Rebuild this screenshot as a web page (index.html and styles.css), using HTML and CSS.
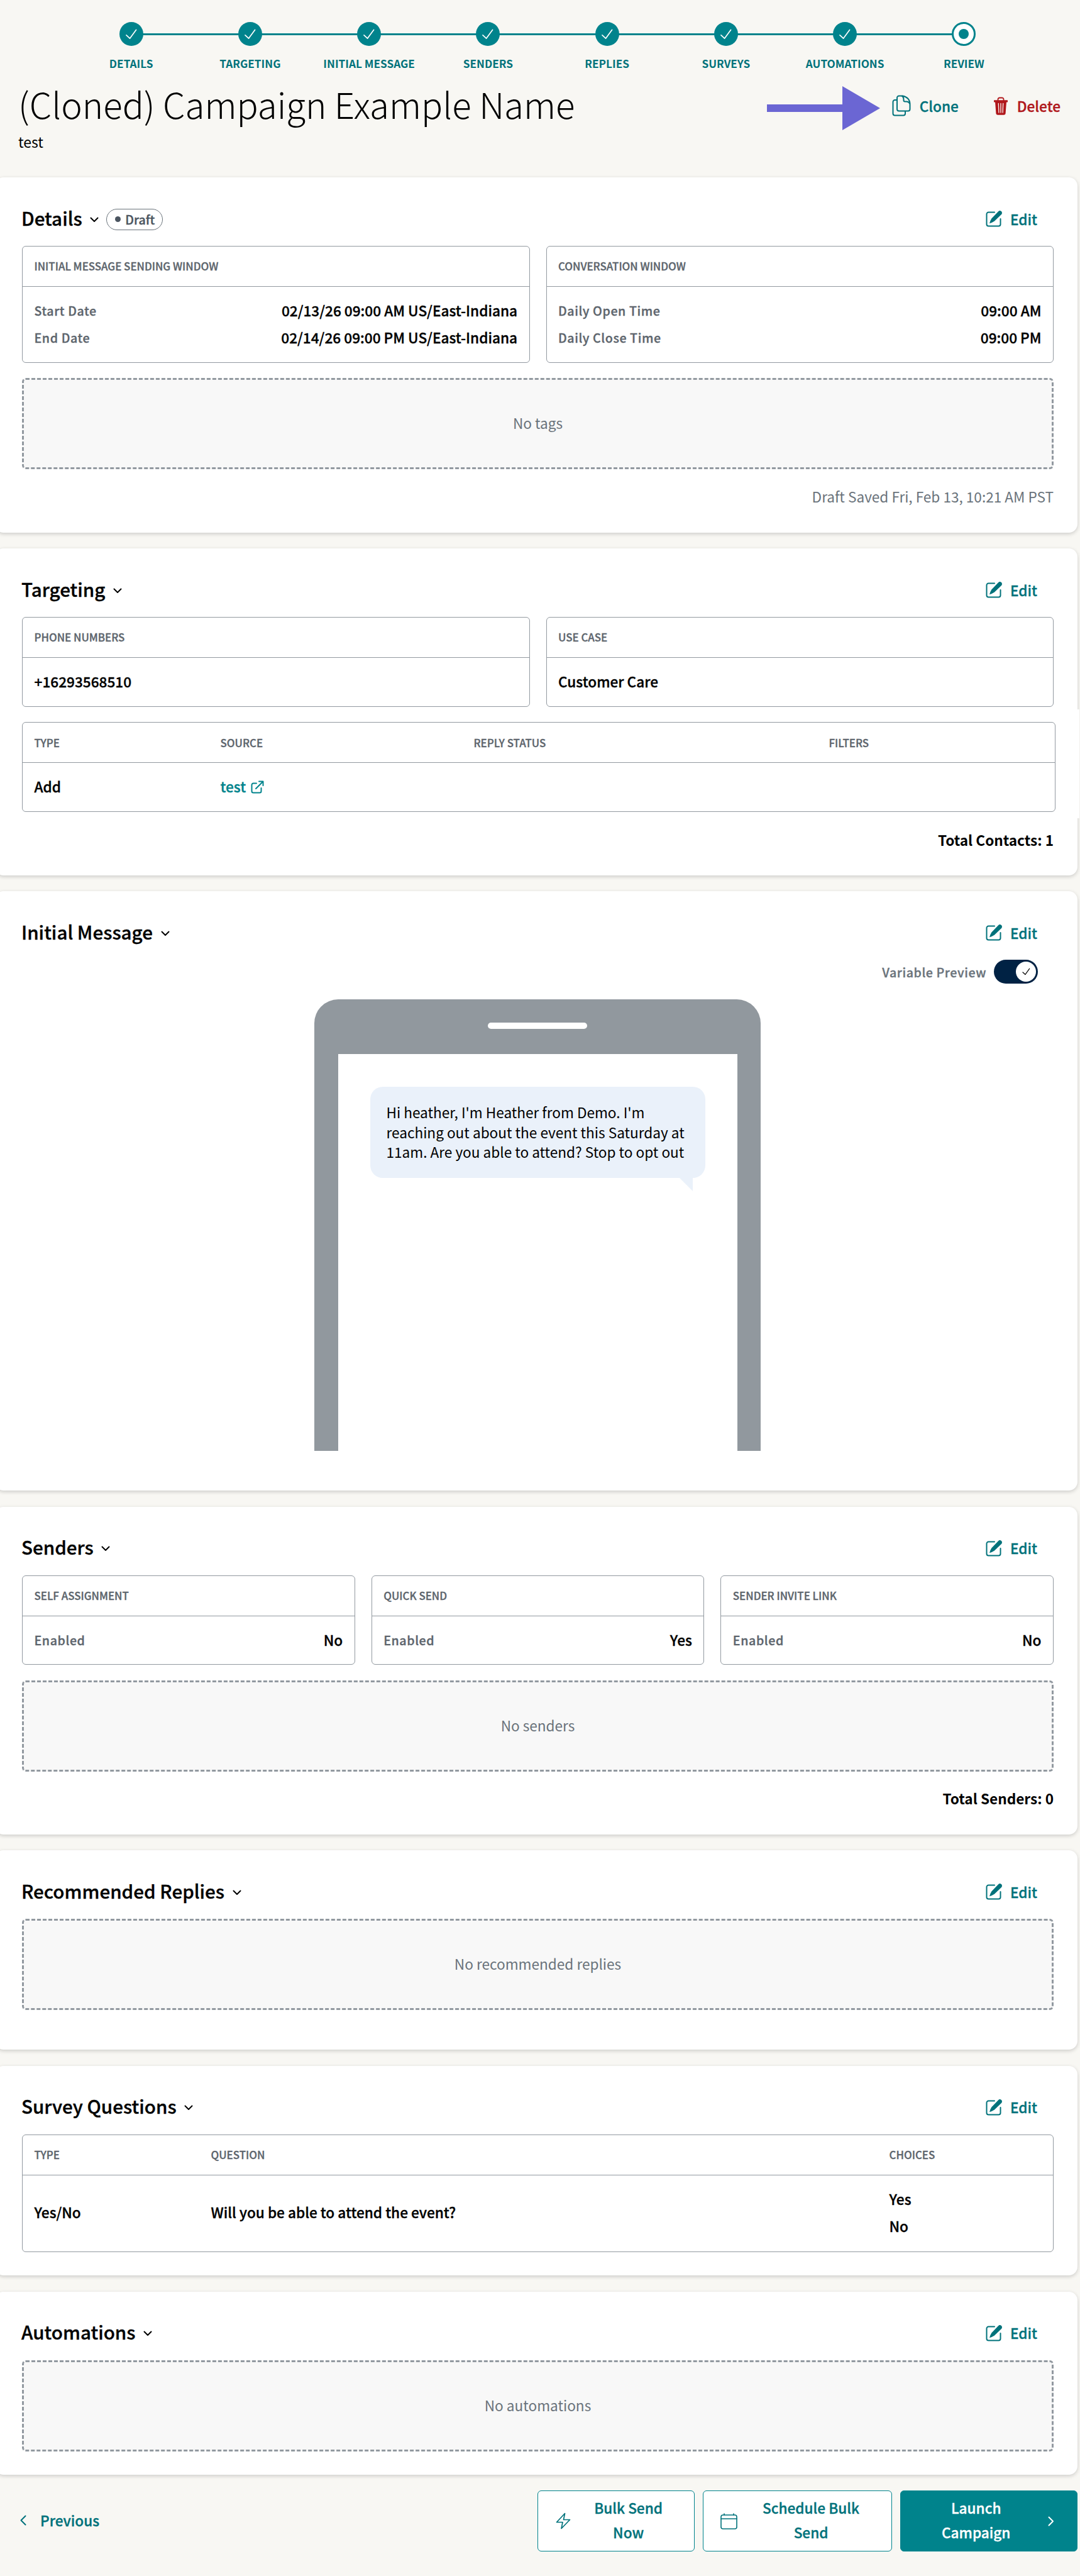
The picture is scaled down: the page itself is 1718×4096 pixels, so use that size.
FILE: index.html
```
<!DOCTYPE html>
<html lang="en">
<head>
    <meta charset="utf-8">
    <title>Campaign Review</title>
    <link rel="stylesheet" href="styles.css">
</head>
<body>

    <!-- icons used more than once -->
    <svg class="sprite" width="0" height="0">
        <symbol id="check" viewBox="0 0 20 18"><path d="M1.5 10.5 7.5 16 18 1.5" fill="none" stroke="currentColor" stroke-width="1.8" stroke-linecap="round" stroke-linejoin="round"/></symbol>
        <symbol id="chevron" viewBox="0 0 14 9"><path d="M1.5 1.5 7 7 12.5 1.5" fill="none" stroke="currentColor" stroke-width="2" stroke-linecap="round" stroke-linejoin="round"/></symbol>
        <symbol id="edit" viewBox="0 0 26 26">
            <path d="M14 2.5H4.5A3 3 0 0 0 1.5 5.5V21.5A3 3 0 0 0 4.5 24.5H20.5A3 3 0 0 0 23.5 21.5V13" fill="none" stroke="currentColor" stroke-width="2" stroke-linecap="round"/>
            <path d="M25 1.2a3.3 3.3 0 0 0-4.7-.1L9.5 12.2Q7.2 15.5 6 20.2q4.8-1.2 8-3.6L25 6Q27 3.5 25 1.2Z" fill="currentColor"/>
        </symbol>
    </svg>

    <ol class="steps">
        <li><span class="dot"><svg><use href="#check"/></svg></span>Details</li>
        <li><span class="dot"><svg><use href="#check"/></svg></span>Targeting</li>
        <li><span class="dot"><svg><use href="#check"/></svg></span>Initial Message</li>
        <li><span class="dot"><svg><use href="#check"/></svg></span>Senders</li>
        <li><span class="dot"><svg><use href="#check"/></svg></span>Replies</li>
        <li><span class="dot"><svg><use href="#check"/></svg></span>Surveys</li>
        <li><span class="dot"><svg><use href="#check"/></svg></span>Automations</li>
        <li><span class="dot current"></span>Review</li>
    </ol>

    <header class="title-bar">
        <div class="title">
            <h1>(Cloned) Campaign Example Name</h1>
            <p>test</p>
        </div>
        <div class="actions">
            <svg class="arrow" width="180" height="70" viewBox="0 0 180 70"><path d="M0 29H120V0L180 35 120 70V41H0Z" fill="#6b66d3"/></svg>
            <a class="clone">
                <svg width="30" height="34" viewBox="0 0 30 34" fill="none" stroke="currentColor" stroke-width="2" stroke-linejoin="round">
                    <path d="M8 8H4.5A3 3 0 0 0 1.5 11V29.5A3 3 0 0 0 4.5 32.5H18A3 3 0 0 0 21 29.5V26"/>
                    <path d="M11 1.5H17Q28.5 4 28.5 15V22.5A3 3 0 0 1 25.5 25.5H11A3 3 0 0 1 8 22.5V4.5A3 3 0 0 1 11 1.5Z"/>
                    <path d="M15.5 1.5Q18.5 3 18.5 7.5V8.5Q18.5 10.5 20.5 10.5H23Q26.5 10.5 28.5 14"/>
                </svg>
                Clone
            </a>
            <a class="delete">
                <svg width="22" height="29" viewBox="0 0 22 29">
                    <path d="M6.5 6V4A2.5 2.5 0 0 1 9 1.5H13A2.5 2.5 0 0 1 15.5 4V6" fill="none" stroke="currentColor" stroke-width="1.8"/>
                    <path d="M1 5.2H21A1 1 0 0 1 21 8.5H1A1 1 0 0 1 1 5.2Z" fill="currentColor"/>
                    <path d="M2 8H20L18.6 26A3 3 0 0 1 15.7 28.8H6.3A3 3 0 0 1 3.4 26Z" fill="currentColor"/>
                    <path d="M7.3 10.5 7.9 25M14.7 10.5 14.1 25M11 10.5V25" fill="none" stroke="#f8f7f3" stroke-width="1.3" stroke-linecap="round"/>
                </svg>
                Delete
            </a>
        </div>
    </header>

    <section class="card details">
        <div class="card-head">
            <h2>Details <svg class="chev"><use href="#chevron"/></svg></h2>
            <span class="badge">Draft</span>
            <a class="edit"><svg><use href="#edit"/></svg>Edit</a>
        </div>
        <div class="boxes">
            <div class="box">
                <h3>Initial Message Sending Window</h3>
                <dl>
                    <div><dt>Start Date</dt><dd>02/13/26 09:00 AM US/East-Indiana</dd></div>
                    <div><dt>End Date</dt><dd>02/14/26 09:00 PM US/East-Indiana</dd></div>
                </dl>
            </div>
            <div class="box">
                <h3>Conversation Window</h3>
                <dl>
                    <div><dt>Daily Open Time</dt><dd>09:00 AM</dd></div>
                    <div><dt>Daily Close Time</dt><dd>09:00 PM</dd></div>
                </dl>
            </div>
        </div>
        <div class="empty">No tags</div>
        <p class="saved">Draft Saved Fri, Feb 13, 10:21 AM PST</p>
    </section>

    <section class="card targeting">
        <div class="card-head">
            <h2>Targeting <svg class="chev"><use href="#chevron"/></svg></h2>
            <a class="edit"><svg><use href="#edit"/></svg>Edit</a>
        </div>
        <div class="boxes">
            <div class="box">
                <h3>Phone Numbers</h3>
                <dl><div><dd>+16293568510</dd></div></dl>
            </div>
            <div class="box">
                <h3>Use Case</h3>
                <dl><div><dd>Customer Care</dd></div></dl>
            </div>
        </div>
        <div class="table-wrap">
            <table class="contacts">
                <tr>
                    <th class="c-type">Type</th>
                    <th class="c-source">Source</th>
                    <th class="c-reply">Reply Status</th>
                    <th>Filters</th>
                </tr>
                <tr>
                    <td>Add</td>
                    <td>
                        <a class="link">test
                            <svg width="21" height="21" viewBox="0 0 21 21" fill="none" stroke="currentColor" stroke-width="2" stroke-linecap="round" stroke-linejoin="round">
                                <path d="M9 4.5H4A2.5 2.5 0 0 0 1.5 7V17A2.5 2.5 0 0 0 4 19.5H14A2.5 2.5 0 0 0 16.5 17V12"/>
                                <path d="M8 13 19.3 1.7M13 1.5H19.5V8"/>
                            </svg>
                        </a>
                    </td>
                    <td></td>
                    <td></td>
                </tr>
            </table>
        </div>
        <p class="total">Total Contacts: 1</p>
    </section>

    <section class="card message">
        <div class="card-head">
            <h2>Initial Message <svg class="chev"><use href="#chevron"/></svg></h2>
            <a class="edit"><svg><use href="#edit"/></svg>Edit</a>
        </div>
        <div class="preview">
            <span>Variable Preview</span>
            <span class="toggle"><span class="knob"><svg><use href="#check"/></svg></span></span>
        </div>
        <div class="phone">
            <div class="speaker"></div>
            <div class="screen">
                <div class="bubble">Hi heather, I'm Heather from Demo. I'm<br>reaching out about the event this Saturday at<br>11am. Are you able to attend? Stop to opt out</div>
            </div>
        </div>
    </section>

    <section class="card senders">
        <div class="card-head">
            <h2>Senders <svg class="chev"><use href="#chevron"/></svg></h2>
            <a class="edit"><svg><use href="#edit"/></svg>Edit</a>
        </div>
        <div class="boxes">
            <div class="box">
                <h3>Self Assignment</h3>
                <dl><div><dt>Enabled</dt><dd>No</dd></div></dl>
            </div>
            <div class="box">
                <h3>Quick Send</h3>
                <dl><div><dt>Enabled</dt><dd>Yes</dd></div></dl>
            </div>
            <div class="box">
                <h3>Sender Invite Link</h3>
                <dl><div><dt>Enabled</dt><dd>No</dd></div></dl>
            </div>
        </div>
        <div class="empty">No senders</div>
        <p class="total">Total Senders: 0</p>
    </section>

    <section class="card replies">
        <div class="card-head">
            <h2>Recommended Replies <svg class="chev"><use href="#chevron"/></svg></h2>
            <a class="edit"><svg><use href="#edit"/></svg>Edit</a>
        </div>
        <div class="empty">No recommended replies</div>
    </section>

    <section class="card surveys">
        <div class="card-head">
            <h2>Survey Questions <svg class="chev"><use href="#chevron"/></svg></h2>
            <a class="edit"><svg><use href="#edit"/></svg>Edit</a>
        </div>
        <table class="questions">
            <tr>
                <th class="q-type">Type</th>
                <th class="q-question">Question</th>
                <th>Choices</th>
            </tr>
            <tr>
                <td>Yes/No</td>
                <td>Will you be able to attend the event?</td>
                <td>Yes<br>No</td>
            </tr>
        </table>
    </section>

    <section class="card automations">
        <div class="card-head">
            <h2>Automations <svg class="chev"><use href="#chevron"/></svg></h2>
            <a class="edit"><svg><use href="#edit"/></svg>Edit</a>
        </div>
        <div class="empty">No automations</div>
    </section>

    <footer>
        <a class="previous">
            <svg width="10" height="17" viewBox="0 0 10 17"><path d="M8.5 1.5 1.5 8.5 8.5 15.5" fill="none" stroke="currentColor" stroke-width="2" stroke-linecap="round" stroke-linejoin="round"/></svg>
            Previous
        </a>
        <button class="bulk">
            <svg width="24" height="27" viewBox="0 0 24 27"><path d="M14.5 1.5 1.5 15.5H11L9 25.5 22.5 11.5H12.5Z" fill="none" stroke="currentColor" stroke-width="1.7" stroke-linejoin="round"/></svg>
            <span>Bulk Send<br>Now</span>
        </button>
        <button class="schedule">
            <svg width="27" height="26" viewBox="0 0 27 26" fill="none" stroke="currentColor" stroke-width="1.6" stroke-linecap="round"><rect x="1" y="3" width="25" height="22" rx="3"/><path d="M1 9H26M6 1V3M21 1V3"/></svg>
            <span>Schedule Bulk<br>Send</span>
        </button>
        <button class="launch">
            <span>Launch<br>Campaign</span>
            <svg width="10" height="16" viewBox="0 0 10 16"><path d="M1.5 1.5 8 8 1.5 14.5" fill="none" stroke="currentColor" stroke-width="2" stroke-linecap="round" stroke-linejoin="round"/></svg>
        </button>
    </footer>

</body>
</html>
```
FILE: styles.css
```
* {
    box-sizing: border-box;
}

body {
    margin: 0;
    background-color: #f8f7f3;
    color: #000;
    font-family: "Noto Sans CJK SC", "Noto Sans", sans-serif;
    font-size: 22.6px;
    overflow-x: hidden;
}

h1, h2, h3, p, dl, dd, ol {
    margin: 0;
    padding: 0;
}

/* medium is a bit thin for headings and values */
h2, h3, th, td, dt, dd, .actions a, .edit, .preview, .previous, .badge, button {
    -webkit-text-stroke: 0.35px currentColor;
}

.sprite {
    position: absolute;
}

/* stepper */
.steps {
    display: flex;
    width: 1514px;
    margin-left: 114px;
    padding-top: 35px;
    list-style: none;
}

.steps li {
    position: relative;
    flex: 1;
    display: flex;
    flex-direction: column;
    align-items: center;
    color: #00727b;
    font-size: 17.2px;
    font-weight: 700;
    line-height: 20px;
    text-transform: uppercase;
}

.steps li + li::before {
    content: "";
    position: absolute;
    top: 18px;
    right: 50%;
    width: 100%;
    height: 3px;
    background-color: #00838c;
}

.dot {
    position: relative;
    z-index: 1;
    display: flex;
    align-items: center;
    justify-content: center;
    width: 38px;
    height: 38px;
    margin-bottom: 18px;
    border-radius: 50%;
    background-color: #00838c;
    color: #fff;
}

.dot svg {
    width: 20px;
    height: 17px;
}

.current {
    border: 3px solid #00838c;
    background-color: #fff;
}

.current::after {
    content: "";
    width: 16px;
    height: 16px;
    border-radius: 50%;
    background-color: #00838c;
}

/* title */
.title-bar {
    display: flex;
    justify-content: space-between;
    height: 171px;
    padding: 21px 31px 0 29px;
}

h1 {
    font-size: 56.5px;
    font-weight: 300;
    line-height: 64px;
    white-space: nowrap;
}

.title p {
    margin-top: 14px;
    font-size: 23px;
    line-height: 30px;
}

.actions {
    display: flex;
    align-items: center;
    height: 72px;
    font-weight: 500;
}

.actions a {
    display: flex;
    align-items: center;
}

.arrow {
    margin: 7px 19px 0 0;
}

.clone {
    gap: 14px;
    margin-right: 56px;
    color: #00727b;
}

.delete {
    gap: 15px;
    color: #b0171b;
}

/* cards */
.card {
    width: 1722px;
    margin: 0 0 25.5px -8px;
    padding: 0 38px 0 43px;
    border-radius: 14px;
    background-color: #fff;
    box-shadow: 0 2px 6px rgba(0, 0, 0, 0.18);
}

.card-head {
    display: flex;
    align-items: center;
    height: 109px;
    padding-bottom: 14px;
}

h2 {
    margin-top: 34px;
    margin-left: -1px;
    font-size: 29.6px;
    font-weight: 500;
    line-height: 40px;
}

.chev {
    width: 14px;
    height: 9px;
    margin-left: 6px;
    vertical-align: 5px;
}

.badge {
    display: flex;
    align-items: center;
    gap: 7px;
    width: 90px;
    height: 34px;
    margin: 38px 0 0 12px;
    padding-left: 13px;
    border: 1.5px solid #6a737b;
    border-radius: 17px;
    color: #4b5560;
    font-size: 19.6px;
    font-weight: 500;
}

.badge::before {
    content: "";
    width: 9px;
    height: 9px;
    border-radius: 50%;
    background-color: #4b5560;
}

.edit {
    display: flex;
    align-items: center;
    gap: 13px;
    margin: 37px 26px 0 auto;
    color: #00727b;
    font-weight: 500;
}

.edit svg {
    width: 26px;
    height: 26px;
}

.boxes {
    display: flex;
    gap: 26px;
    margin-bottom: 24.5px;
}

.box {
    flex: 1;
    border: 1px solid #9299a0;
    border-radius: 6px;
}

h3, th {
    height: 64px;
    padding: 0 18.5px;
    border-bottom: 1px solid #9299a0;
    color: #5d656d;
    font-size: 16.9px;
    font-weight: 500;
    line-height: 62px;
    text-align: left;
    text-transform: uppercase;
}

dl {
    padding: 16px 18.5px 17.5px;
}

dl div {
    display: flex;
    justify-content: space-between;
    line-height: 43px;
}

dt {
    color: #5d656d;
    font-size: 19.6px;
    font-weight: 500;
    letter-spacing: 0.6px;
}

dd {
    font-weight: 500;
}

.empty {
    height: 145px;
    border: 3px dashed #9299a0;
    border-radius: 6px;
    background-color: #f8f8f8;
    color: #6a737b;
    line-height: 138px;
    text-align: center;
}

.saved, .total {
    text-align: right;
    line-height: 30px;
}

.saved {
    margin-top: 29px;
    color: #6a737b;
}

.total {
    margin-top: 28px;
    font-weight: 700;
}

.targeting .total {
    margin-top: 30px;
}

.details { height: 564.5px; }
.targeting { height: 519.5px; }
.message { height: 953px; }
.senders { height: 521px; }
.replies { height: 317px; }
.surveys { height: 333.5px; }
.automations { height: 291px; }

/* tables */
table {
    width: 100%;
    border: 1px solid #9299a0;
    border-radius: 6px;
    border-spacing: 0;
    table-layout: fixed;
}

td {
    padding: 16px 18.5px 18px;
    font-weight: 500;
    line-height: 43px;
}

.questions td {
    padding-bottom: 19px;
}

/* runs a little past the edge of the card */
.table-wrap {
    width: 1682px;
    margin: -20px 0 -10px;
    padding: 20px 38px 10px 0;
    background-color: #fff;
}

.c-type { width: 296px; }
.c-source { width: 403px; }
.c-reply { width: 565px; }
.q-type { width: 281px; }
.q-question { width: 1079px; }

.link {
    color: #00838c;
}

.link svg {
    margin-left: 3px;
    vertical-align: -2px;
}

/* message preview */
.preview {
    display: flex;
    align-items: center;
    justify-content: flex-end;
    gap: 12px;
    height: 38px;
    margin-right: 25px;
    color: #6a737b;
    font-size: 19.6px;
    font-weight: 500;
    letter-spacing: 0.6px;
}

.toggle {
    display: flex;
    justify-content: flex-end;
    width: 70px;
    height: 38px;
    padding: 3px;
    border-radius: 19px;
    background-color: #002244;
}

.knob {
    display: flex;
    align-items: center;
    justify-content: center;
    width: 32px;
    height: 32px;
    border-radius: 50%;
    background-color: #fff;
    color: #000;
}

.knob svg {
    width: 13px;
    height: 12px;
}

.phone {
    width: 710px;
    height: 718px;
    margin: 25px 0 0 465px;
    padding: 37px 37.5px 0;
    border-radius: 38px 38px 0 0;
    background-color: #91989e;
}

.speaker {
    width: 158px;
    height: 10px;
    margin: 0 auto 40px;
    border-radius: 5px;
    background-color: #fff;
}

.screen {
    height: 631px;
    padding: 52px 51px;
    background-color: #fff;
}

.bubble {
    position: relative;
    height: 145px;
    padding: 25px 0 0 26px;
    border-radius: 20px;
    background-color: #eaf1fa;
    line-height: 31.6px;
    white-space: nowrap;
}

.bubble::after {
    content: "";
    position: absolute;
    right: 20px;
    bottom: -21px;
    border-top: 21px solid #eaf1fa;
    border-left: 21px solid transparent;
}

/* bottom buttons */
footer {
    display: flex;
    align-items: center;
    gap: 13px;
    height: 97px;
    padding: 0 4px 0 32px;
}

.previous {
    display: flex;
    align-items: center;
    gap: 22px;
    margin-top: -2px;
    margin-right: auto;
    color: #00727b;
    font-weight: 500;
}

button {
    display: flex;
    align-items: center;
    justify-content: space-between;
    height: 97px;
    padding: 0;
    border: 1px solid #00838c;
    border-radius: 6px;
    background-color: #fff;
    color: #00727b;
    font-family: inherit;
    font-size: 22.6px;
    font-weight: 500;
    line-height: 38.5px;
    text-align: center;
}

button span {
    margin-top: -2px;
}

.bulk {
    width: 250px;
    padding: 0 50px 0 28px;
}

.schedule {
    width: 301px;
    padding: 0 51px 0 27px;
}

.launch {
    width: 282px;
    padding: 0 36px 0 65px;
    background-color: #00838c;
    color: #fff;
}
```
